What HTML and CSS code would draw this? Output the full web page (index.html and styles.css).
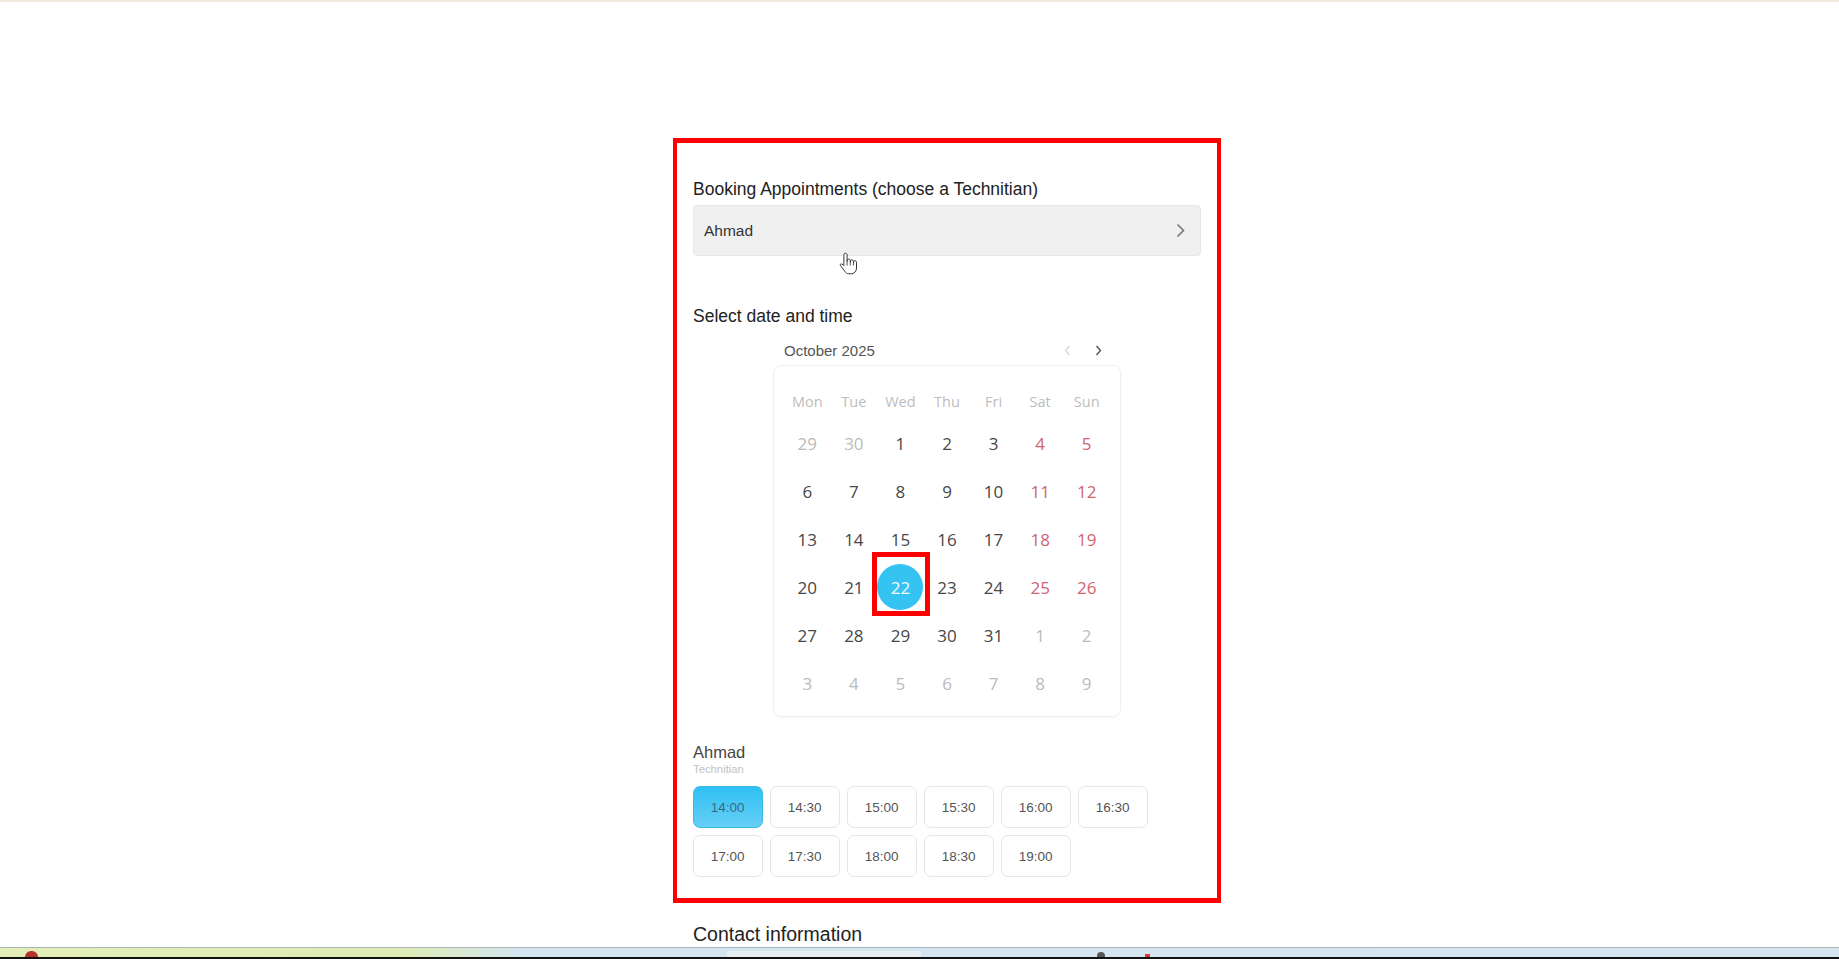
FILE: index.html
```html
<!DOCTYPE html>
<html lang="en">
<head>
  <meta charset="UTF-8" />
  <meta name="viewport" content="width=device-width, initial-scale=1.0"/>
  <title>Booking Appointments</title>
  <link rel="stylesheet" href="styles.css">
</head>
<body>
  <div class="topline"></div>

  <div class="page">
    <!-- Varaus -->
    <section class="booking">
      <h2 class="label">Booking Appointments (choose a Technitian)</h2>
      <button class="picker">
        <span>Ahmad</span>
        <svg width="9" height="15" viewBox="0 0 9 15"><path d="M1.5 1.5 L7.5 7.5 L1.5 13.5" fill="none" stroke="#777" stroke-width="1.6"/></svg>
      </button>

      <h2 class="label date-label">Select date and time</h2>
      <div class="calendar">
        <div class="cal-head">
          <span>October 2025</span>
          <div class="cal-nav">
            <button class="nav prev"><svg width="7" height="11" viewBox="0 0 7 11"><path d="M5.5 1 L1.5 5.5 L5.5 10" fill="none" stroke="currentColor" stroke-width="1.4"/></svg></button>
            <button class="nav next"><svg width="7" height="11" viewBox="0 0 7 11"><path d="M1.5 1 L5.5 5.5 L1.5 10" fill="none" stroke="currentColor" stroke-width="1.4"/></svg></button>
          </div>
        </div>
        <div class="cal-card">
          <div class="cal-grid" id="calGrid"></div>
        </div>
      </div>

      <div class="tech">
        <div class="tech-name">Ahmad</div>
        <div class="tech-role">Technitian</div>
      </div>
      <div class="slots" id="slots"></div>

      <!-- hiiren osoitin -->
      <svg class="cursor" width="19" height="23" viewBox="0 0 19 23">
        <path d="M6.5 1.2 c0.9 0 1.6 0.7 1.6 1.6 V9.5 V8.6 c0-0.9 0.7-1.5 1.6-1.5 s1.6 0.6 1.6 1.5 V10 V9.4 c0-0.9 0.7-1.5 1.6-1.5 s1.6 0.6 1.6 1.5 V10.6 V10.2 c0-0.9 0.7-1.4 1.5-1.4 s1.5 0.5 1.5 1.4 V16 c0 3-2 5.8-5 5.8 H9.8 c-1.8 0-3-1-4-2.4 L1.4 13.4 c-0.6-0.9 0.4-2 1.4-1.4 L4.9 13.6 V2.8 c0-0.9 0.7-1.6 1.6-1.6 Z" fill="#fff" stroke="#222" stroke-width="0.9"/>
        <path d="M8.1 9.5 V13.5 M11.3 10 V13.5 M14.5 10.6 V13.5" stroke="#222" stroke-width="0.8"/>
      </svg>
    </section>

    <h2 class="contact">Contact information</h2>
  </div>

  <div class="taskbar">
    <span class="tb-orb"></span>
    <span class="tb-search"></span>
    <span class="tb-icon"></span>
    <span class="tb-dot"></span>
  </div>

  <script>
    const weekdays = ["Mon", "Tue", "Wed", "Thu", "Fri", "Sat", "Sun"];
    const grid = document.getElementById("calGrid");

    weekdays.forEach(d => {
      grid.innerHTML += `<div class="wd">${d}</div>`;
    });

    // lokakuu 2025 alkaa keskiviikosta
    const days = [29, 30];
    for (let i = 1; i <= 31; i++) days.push(i);
    for (let i = 1; i <= 9; i++) days.push(i);

    days.forEach((d, i) => {
      let cls = "day";
      const other = i < 2 || i >= 33;
      if (other) cls += " other";
      else if (i % 7 >= 5) cls += " weekend";
      if (!other && d === 22) {
        grid.innerHTML += `<div class="${cls}"><span class="sel">${d}</span><span class="mark"></span></div>`;
      } else {
        grid.innerHTML += `<div class="${cls}">${d}</div>`;
      }
    });

    const slots = document.getElementById("slots");
    for (let m = 14 * 60; m <= 19 * 60; m += 30) {
      const t = Math.floor(m / 60) + ":" + (m % 60 === 0 ? "00" : "30");
      slots.innerHTML += `<button class="slot${m === 840 ? " active" : ""}">${t}</button>`;
    }
  </script>
</body>
</html>
```

FILE: styles.css
```css
html, body {
  margin: 0;
  padding: 0;
  height: 100%;
  font-family: 'Liberation Sans', Arial, sans-serif;
  background: #fff;
  color: #222;
  overflow: hidden;
}

body {
  display: flex;
  flex-direction: column;
}

.topline {
  height: 2px;
  background: #f1e9e0;
}

.page {
  flex: 1;
  width: 548px;
  margin: 0 auto;
  padding: 136px 0 0 55px;
}

button {
  font-family: inherit;
  cursor: pointer;
}

.booking {
  position: relative;
  border: solid #ff0000;
  border-width: 5px 4px;
  padding: 35px 16px 21px;
}

.label {
  margin: 0;
  font-size: 17.5px;
  line-height: 22px;
  font-weight: normal;
  color: #222;
}

.picker {
  display: flex;
  align-items: center;
  justify-content: space-between;
  width: 100%;
  height: 51px;
  margin-top: 5px;
  padding: 0 15px 0 10px;
  background: #f0f0f0;
  border: 1px solid #e8e8e8;
  border-radius: 4px;
  font-size: 15.5px;
  color: #333;
}

.date-label {
  margin-top: 49px;
}

.calendar {
  width: 348px;
  margin: 13px auto 0;
}

.cal-head {
  display: flex;
  align-items: center;
  justify-content: space-between;
  height: 20px;
  padding: 0 11px;
  font-size: 15px;
  color: #555;
}

.cal-nav {
  display: flex;
  gap: 7px;
}

.nav {
  width: 24px;
  height: 20px;
  padding: 0;
  border: none;
  background: none;
  display: flex;
  align-items: center;
  justify-content: center;
}

.prev { color: #d6d6d6; }
.next { color: #555; }

.cal-card {
  margin-top: 5px;
  padding: 17px 10px 9px;
  border: 1px solid #f0f0f0;
  border-radius: 8px;
  box-shadow: 0 1px 3px rgba(0, 0, 0, 0.03);
}

.cal-grid {
  display: grid;
  grid-template-columns: repeat(7, 1fr);
  grid-template-rows: 36px;
  grid-auto-rows: 48px;
  font-family: 'Open Sans', 'Noto Sans', sans-serif;
}

.wd {
  display: flex;
  align-items: center;
  justify-content: center;
  font-size: 14.5px;
  color: #bdbdbd;
}

.day {
  position: relative;
  display: flex;
  align-items: center;
  justify-content: center;
  font-size: 17px;
  color: #474747;
}

.day.weekend { color: #cf6470; }
.day.other { color: #bbb; }

.sel {
  width: 46px;
  height: 46px;
  border-radius: 50%;
  background: #35c4f2;
  color: #f2fbff;
  display: flex;
  align-items: center;
  justify-content: center;
}

.mark {
  position: absolute;
  top: -11px;
  left: -5px;
  width: 48px;
  height: 54px;
  border: 5px solid #ff0000;
}

.tech {
  margin-top: 25px;
}

.tech-name {
  font-size: 16.5px;
  line-height: 20px;
  color: #444;
}

.tech-role {
  font-size: 11.3px;
  line-height: 14px;
  color: #c2c2c2;
}

.slots {
  display: flex;
  flex-wrap: wrap;
  gap: 7px 7.5px;
  margin-top: 10px;
}

.slot {
  width: 69.5px;
  height: 42px;
  padding: 0;
  background: #fff;
  border: 1px solid #e6e6e6;
  border-radius: 7px;
  font-size: 13.5px;
  color: #555;
}

.slot.active {
  background: linear-gradient(#2fc1f4, #66cff6);
  border-color: #3bb9e6;
  color: #3a6884;
}

.cursor {
  position: absolute;
  left: 162px;
  top: 109px;
}

.contact {
  margin: 19px 0 0 20px;
  font-size: 19.5px;
  line-height: 24px;
  font-weight: normal;
  color: #222;
}

.taskbar {
  height: 9px;
  display: flex;
  align-items: flex-end;
  border-top: 1px solid #a9b3bb;
  border-bottom: 2px solid #111;
  background: linear-gradient(90deg, #e3efb6 0, #dfedb4 400px, #d3e5ef 520px, #d7e5ef 100%);
}

.tb-orb {
  width: 13px;
  height: 6px;
  margin-left: 25px;
  border-radius: 7px 7px 0 0;
  background: #b4332b;
}

.tb-search {
  width: 194px;
  height: 6px;
  margin-left: 689px;
  background: #e6eef4;
}

.tb-icon {
  width: 8px;
  height: 5px;
  margin-left: 176px;
  border-radius: 4px 4px 0 0;
  background: #555;
}

.tb-dot {
  width: 5px;
  height: 3px;
  margin-left: 40px;
  background: #d33;
}
```
